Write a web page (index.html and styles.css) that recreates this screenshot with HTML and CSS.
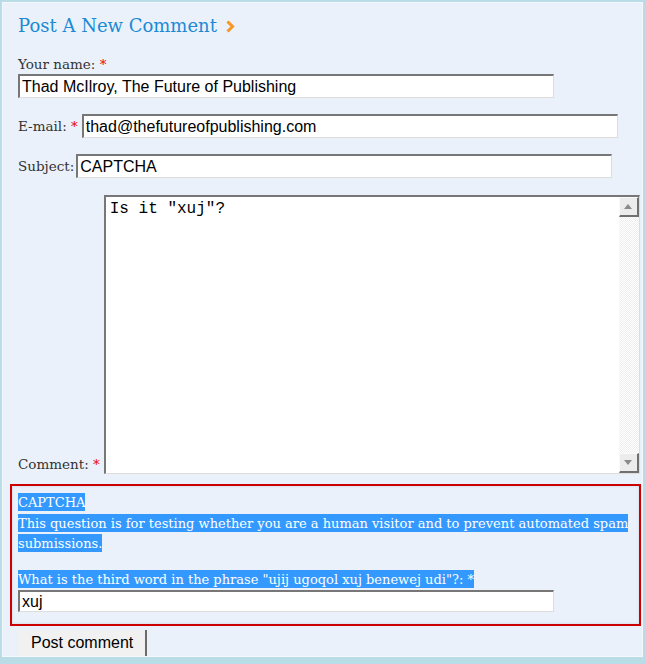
FILE: index.html
```html
<!DOCTYPE html>
<html lang="en">

<head>
    <meta charset="UTF-8">
    <meta name="viewport" content="width=device-width, initial-scale=1.0">
    <link rel="stylesheet" href="styles.css">
    <title>Post A New Comment</title>
</head>

<body>
    <div class="page">
        <div class="panel">
            <h2 class="title">Post A New Comment
                <svg class="title-arrow" width="9" height="13" viewBox="0 0 9 13">
                    <polyline points="1.5,1.5 6.5,6.5 1.5,11.5" fill="none" stroke="#f7941d" stroke-width="3" />
                    <polyline points="1,1 6,6.5 1,12" fill="none" stroke="#fbb36a" stroke-width="1" stroke-dasharray="1 2" />
                </svg>
            </h2>
            <form class="comment-form">
                <div class="form-item stacked">
                    <label for="edit-name">Your name: <span class="required">*</span></label>
                    <input type="text" id="edit-name" class="form-text" value="Thad McIlroy, The Future of Publishing">
                </div>
                <div class="form-item">
                    <label for="edit-mail">E-mail: <span class="required">*</span></label>
                    <input type="text" id="edit-mail" class="form-text" value="thad@thefutureofpublishing.com">
                </div>
                <div class="form-item subject">
                    <label for="edit-subject">Subject:</label>
                    <input type="text" id="edit-subject" class="form-text" value="CAPTCHA">
                </div>
                <div class="form-item comment">
                    <label for="edit-comment">Comment: <span class="required">*</span></label>
                    <div class="textarea-wrap">
                        <textarea id="edit-comment">Is it "xuj"?</textarea>
                        <div class="scrollbar">
                            <div class="scroll-btn up"></div>
                            <div class="scroll-track"></div>
                            <div class="scroll-btn down"></div>
                        </div>
                    </div>
                </div>
                <fieldset class="captcha">
                    <div class="captcha-title"><span class="sel">CAPTCHA</span></div>
                    <div class="captcha-desc"><span class="sel">This question is for testing whether you are a human visitor and to prevent automated spam submissions.</span></div>
                    <label class="captcha-label" for="edit-captcha"><span class="sel">What is the third word in the phrase "ujij ugoqol xuj benewej udi"?: *</span></label>
                    <input type="text" id="edit-captcha" class="form-text small" value="xuj">
                </fieldset>
                <button type="submit" class="submit">Post comment</button>
            </form>
        </div>
    </div>
</body>

</html>
```

FILE: styles.css
```css
body {
    margin: 0;
    background-color: #badce7;
    font-family: "DejaVu Serif", Georgia, serif;
}

.page {
    padding: 2px 3px 0 2px;
}

.panel {
    height: 655px;
    box-sizing: border-box;
    background-color: #eaf1fb;
    border: 1px solid #f4f8fd;
    padding: 10px 0 0 15px;
    overflow: hidden;
}

.title {
    margin: 0 0 16px;
    font-size: 18px;
    font-weight: normal;
    line-height: 26px;
    color: #1c8ad4;
}

.title-arrow {
    margin-left: 3px;
    vertical-align: -1px;
}

.form-item {
    display: flex;
    align-items: center;
    gap: 4px;
    margin-bottom: 16px;
    font-size: 13.5px;
    color: #333;
}

.form-item.stacked {
    display: block;
}

.form-item.stacked label {
    display: block;
    line-height: 18px;
    margin-bottom: 1px;
}

.form-item.subject {
    gap: 2px;
    margin-bottom: 17px;
}

.form-item.comment {
    align-items: flex-end;
    margin-bottom: 10px;
}

.form-item.comment label {
    margin-bottom: 2px;
}

.required {
    color: #e00;
}

.form-text {
    display: block;
    width: 536px;
    height: 24px;
    box-sizing: border-box;
    margin: 0;
    padding: 0 2px;
    border-style: solid;
    border-width: 2px 1px 1px 2px;
    border-color: #777 #ddd #ddd #777;
    background-color: #fff;
    color: #000;
    font: 16px "Liberation Sans", Arial, sans-serif;
}

.form-text.small {
    height: 22px;
}

.textarea-wrap {
    display: flex;
    width: 536px;
    height: 279px;
    box-sizing: border-box;
    border-style: solid;
    border-width: 2px 1px 1px 2px;
    border-color: #777 #ddd #ddd #777;
    background-color: #fff;
}

.textarea-wrap textarea {
    flex: 1;
    margin: 0;
    padding: 3px 4px;
    border: none;
    outline: none;
    resize: none;
    overflow: hidden;
    background: transparent;
    color: #000;
    font: 16px "Liberation Mono", "Courier New", monospace;
}

.scrollbar {
    width: 20px;
    display: flex;
    flex-direction: column;
    background: repeating-conic-gradient(#eeeeee 0 25%, #ffffff 0 50%) 0 0 / 2px 2px;
}

.scroll-btn {
    height: 20px;
    box-sizing: border-box;
    display: flex;
    align-items: center;
    justify-content: center;
    background-color: #ececec;
    border-style: solid;
    border-width: 1px 2px 2px 1px;
    border-color: #fafafa #707070 #707070 #fafafa;
}

.scroll-btn::after {
    content: "";
    border-left: 4px solid transparent;
    border-right: 4px solid transparent;
}

.scroll-btn.up::after {
    border-bottom: 5px solid #8a8a8a;
}

.scroll-btn.down::after {
    border-top: 5px solid #8a8a8a;
}

.scroll-track {
    flex: 1;
}

.captcha {
    margin: 0 1px 4px -8px;
    padding: 7px 2px 12px 6px;
    min-width: 0;
    border: 2px solid #cc0000;
    box-shadow: inset 0 0 3px rgba(0, 0, 0, 0.12);
    font-size: 13px;
    line-height: 20px;
    color: #333;
}

.captcha-desc {
    margin-top: 1px;
}

.captcha-label {
    display: block;
    margin-top: 16px;
}

.sel {
    background-color: #3399ff;
    color: #fff;
    padding: 2px 0 1px;
}

.submit {
    display: block;
    height: 28px;
    margin: 0;
    padding: 0 12px 2px 13px;
    border: none;
    border-right: 2px solid #6b6b6b;
    background-color: #f1f1f1;
    color: #000;
    font: 16px "Liberation Sans", Arial, sans-serif;
}
```
